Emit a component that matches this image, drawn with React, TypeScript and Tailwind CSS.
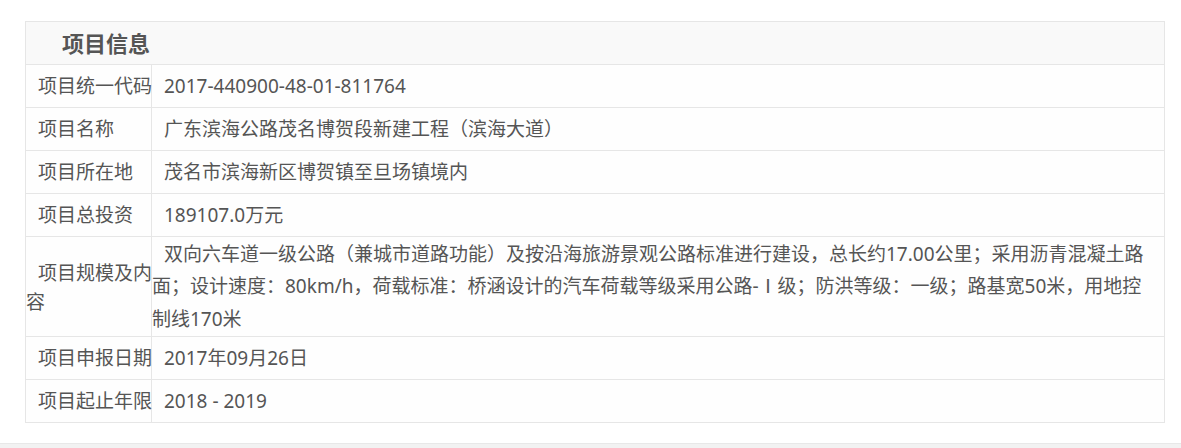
import React from "react";

const font = { fontFamily: '"Noto Sans", "Noto Sans CJK SC", sans-serif' };

type Row = { label: React.ReactNode; value: React.ReactNode; tall?: boolean };

const rows: Row[] = [
  { label: "项目统一代码", value: "2017-440900-48-01-811764" },
  { label: "项目名称", value: "广东滨海公路茂名博贺段新建工程（滨海大道）" },
  { label: "项目所在地", value: "茂名市滨海新区博贺镇至旦场镇境内" },
  { label: "项目总投资", value: "189107.0万元" },
  {
    tall: true,
    label: (
      <>
        <span className="block whitespace-nowrap indent-[12px]">项目规模及内</span>
        <span className="block whitespace-nowrap">容</span>
      </>
    ),
    value: (
      <>
        <span className="block whitespace-nowrap indent-[12px]">
          双向六车道一级公路（兼城市道路功能）及按沿海旅游景观公路标准进行建设，总长约17.00公里；采用沥青混凝土路
        </span>
        <span className="block whitespace-nowrap">
          面；设计速度：80km/h，荷载标准：桥涵设计的汽车荷载等级采用公路-Ⅰ级；防洪等级：一级；路基宽50米，用地控
        </span>
        <span className="block whitespace-nowrap">制线170米</span>
      </>
    ),
  },
  { label: "项目申报日期", value: "2017年09月26日" },
  { label: "项目起止年限", value: "2018 - 2019" },
];

export default function App() {
  return (
    <div className="w-[1181px] h-[448px] bg-white flex flex-col overflow-hidden" style={font}>
      <div className="pt-[21px] pl-[25px]">
        <div className="w-[1140px] border-l border-r border-t border-[#e6e6e6] text-[#555] text-[19px]">
          <div className="h-[43px] bg-[#f9f9f9] border-b border-[#e6e6e6] flex items-center pl-[36px]">
            <span className="text-[22px] font-bold text-[#555]">项目信息</span>
          </div>
          {rows.map((r, i) => (
            <div
              key={i}
              className={`flex border-b border-[#e6e6e6] bg-[#fefefe] ${r.tall ? "min-h-[100px]" : "h-[43px]"}`}
            >
              <div
                className={`w-[126px] shrink-0 border-r border-[#e6e6e6] flex flex-col justify-center ${
                  r.tall ? "leading-[29px] pt-[3px]" : "leading-[32px] indent-[12px] whitespace-nowrap"
                }`}
              >
                {r.label}
              </div>
              <div
                className={`flex-1 flex flex-col justify-center leading-[32.5px] ${
                  r.tall ? "" : "indent-[12px] whitespace-nowrap"
                }`}
              >
                {r.value}
              </div>
            </div>
          ))}
        </div>
      </div>
      <div className="flex-1" />
      <div className="h-[5px] bg-[#f2f2f2] border-t border-[#e8e8e8]" />
    </div>
  );
}
